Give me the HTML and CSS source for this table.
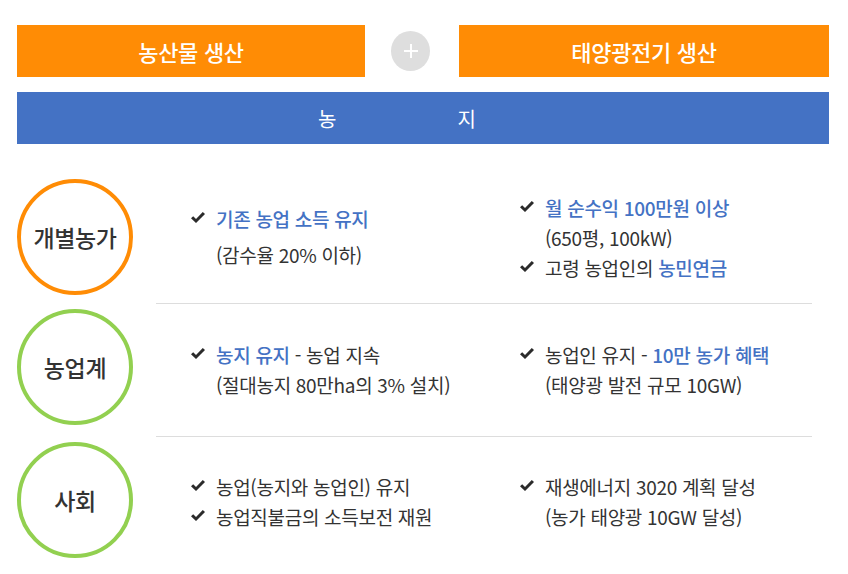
FILE: index.html
```html
<!DOCTYPE html>
<html lang="ko">
<head>
<meta charset="utf-8">
<link rel="stylesheet" href="styles.css">
</head>
<body>
<div class="page">
  <div class="top">
    <div class="bar orange">농산물 생산</div>
    <div class="plus-cell"><div class="plus"></div></div>
    <div class="bar orange">태양광전기 생산</div>
  </div>
  <div class="land"><span class="land-a">농</span><span>지</span></div>

  <div class="rows">
    <div class="row">
      <div class="badge-cell"><div class="badge ring-orange">개별농가</div></div>
      <div class="content">
        <div class="col">
          <div class="item"><svg class="chk" viewBox="0 0 14 11"><path d="M0 6.2 L2.2 4.2 L5 7 L11.8 0 L14 2.1 L5 11 Z"/></svg><span class="hl">기존 농업 소득 유지</span></div>
          <div class="sub gap">(감수율 20% 이하)</div>
        </div>
        <div class="col">
          <div class="item"><svg class="chk" viewBox="0 0 14 11"><path d="M0 6.2 L2.2 4.2 L5 7 L11.8 0 L14 2.1 L5 11 Z"/></svg><span class="hl">월 순수익 100만원 이상</span></div>
          <div class="sub">(650평, 100kW)</div>
          <div class="item"><svg class="chk" viewBox="0 0 14 11"><path d="M0 6.2 L2.2 4.2 L5 7 L11.8 0 L14 2.1 L5 11 Z"/></svg><span>고령 농업인의 <span class="hl">농민연금</span></span></div>
        </div>
      </div>
    </div>

    <div class="row">
      <div class="badge-cell"><div class="badge ring-green">농업계</div></div>
      <div class="content sep">
        <div class="col">
          <div class="item"><svg class="chk" viewBox="0 0 14 11"><path d="M0 6.2 L2.2 4.2 L5 7 L11.8 0 L14 2.1 L5 11 Z"/></svg><span><span class="hl">농지 유지</span> - 농업 지속</span></div>
          <div class="sub">(절대농지 80만ha의 3% 설치)</div>
        </div>
        <div class="col">
          <div class="item"><svg class="chk" viewBox="0 0 14 11"><path d="M0 6.2 L2.2 4.2 L5 7 L11.8 0 L14 2.1 L5 11 Z"/></svg><span>농업인 유지 - <span class="hl">10만 농가 혜택</span></span></div>
          <div class="sub">(태양광 발전 규모 10GW)</div>
        </div>
      </div>
    </div>

    <div class="row last">
      <div class="badge-cell"><div class="badge ring-green">사회</div></div>
      <div class="content sep">
        <div class="col">
          <div class="item"><svg class="chk" viewBox="0 0 14 11"><path d="M0 6.2 L2.2 4.2 L5 7 L11.8 0 L14 2.1 L5 11 Z"/></svg><span>농업(농지와 농업인) 유지</span></div>
          <div class="item"><svg class="chk" viewBox="0 0 14 11"><path d="M0 6.2 L2.2 4.2 L5 7 L11.8 0 L14 2.1 L5 11 Z"/></svg><span>농업직불금의 소득보전 재원</span></div>
        </div>
        <div class="col">
          <div class="item"><svg class="chk" viewBox="0 0 14 11"><path d="M0 6.2 L2.2 4.2 L5 7 L11.8 0 L14 2.1 L5 11 Z"/></svg><span>재생에너지 3020 계획 달성</span></div>
          <div class="sub">(농가 태양광 10GW 달성)</div>
        </div>
      </div>
    </div>
  </div>
</div>
</body>
</html>
```

FILE: styles.css
```css
* { box-sizing: border-box; }
html, body { margin: 0; padding: 0; background: #fff; }
body {
  font-family: "Noto Sans CJK KR", "Noto Sans", sans-serif;
  color: #333;
}
.page {
  width: 848px;
  padding: 25px 0 0 17px;
}
.top {
  display: grid;
  grid-template-columns: 348px 94px 370px;
  height: 52px;
}
.bar {
  display: flex;
  align-items: center;
  justify-content: center;
  color: #fff;
  font-size: 22px;
  font-weight: 500;
  letter-spacing: -0.3px;
}
.orange { background: #ff8c05; }
.plus-cell {
  display: flex;
  align-items: center;
  justify-content: center;
  padding-right: 3px;
}
.plus {
  width: 39px;
  height: 40px;
  border-radius: 50%;
  background: #dedede;
  position: relative;
}
.plus::before, .plus::after {
  content: "";
  position: absolute;
  background: #fff;
  left: 50%;
  top: 50%;
  transform: translate(-50%, -50%);
}
.plus::before { width: 14px; height: 2px; }
.plus::after { width: 2px; height: 14px; }
.land {
  margin-top: 15px;
  width: 812px;
  height: 52px;
  background: #4472c4;
  color: #fff;
  font-size: 20px;
  display: flex;
  align-items: center;
  padding-left: 301px;
}
.land-a { margin-right: 121px; }
.rows {
  margin-top: 29px;
}
.row {
  display: flex;
  height: 130px;
}
.row:nth-child(2) { height: 133px; }
.badge-cell {
  flex: 0 0 139px;
  padding-top: 6px;
}
.badge {
  width: 116px;
  height: 116px;
  border-radius: 50%;
  border: 4px solid;
  display: flex;
  align-items: center;
  justify-content: center;
  font-size: 23px;
  font-weight: 500;
  color: #333;
  letter-spacing: -0.4px;
}
.ring-orange { border-color: #ff8c05; }
.ring-green { border-color: #92d050; }
.content {
  flex: 0 0 656px;
  display: grid;
  grid-template-columns: 329px 1fr;
  align-items: center;
  padding-left: 35px;
}
.content.sep { border-top: 1px solid #dddddd; }
.col {
  font-size: 19px;
  line-height: 30px;
  color: #333;
  letter-spacing: -0.3px;
}
.row:first-child .col:first-child { margin-top: -3px; }
.item {
  display: flex;
  align-items: center;
}
.chk {
  width: 14px;
  height: 11px;
  fill: #2b2b2b;
  margin-right: 11px;
  margin-top: -3px;
  flex: 0 0 auto;
}
.sub { padding-left: 25px; }
.sub.gap { margin-top: 6px; }
.hl { color: #4472c4; font-weight: 500; }
```
